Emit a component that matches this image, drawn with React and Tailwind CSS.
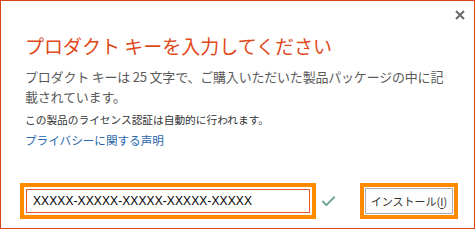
import { Check } from 'lucide-react';

const jp = "font-['Noto_Sans_CJK_JP','Noto_Sans',sans-serif]";

export default function App() {
  return (
    <div className="w-[476px] h-[230px] bg-white">
      <div className={`w-[475px] h-[229px] border border-[#dc4513] bg-white flex flex-col ${jp}`}>
        {/* Header with close */}
        <div className="h-[28px] flex justify-end items-start pt-[9px] pr-[9px]">
          <svg width="10" height="10" viewBox="0 0 10 10" className="text-[#6b6b6b]">
            <path d="M1 1 L9 9 M9 1 L1 9" stroke="currentColor" strokeWidth="2" />
          </svg>
        </div>

        {/* Text */}
        <div className="pl-[24px]">
          <h1 className="mt-[5px] text-[19px] leading-[24px] text-[#e0491a] font-normal whitespace-nowrap">
            プロダクト キーを入力してください
          </h1>
          <p className="mt-[9px] text-[13px] leading-[20px] tracking-[-0.2px] text-[#5a5a5a] whitespace-nowrap">
            プロダクト キーは 25 文字で、ご購入いただいた製品パッケージの中に記
            <br />
            載されています。
          </p>
          <p className="mt-[5px] text-[10.7px] leading-[16px] text-[#333333] whitespace-nowrap">
            この製品のライセンス認証は自動的に行われます。
          </p>
          <p className="mt-[4px] text-[11.6px] leading-[16px] text-[#2a66ac] whitespace-nowrap">
            プライバシーに関する声明
          </p>
        </div>

        {/* Key input row */}
        <div className="mt-auto mb-[9px] pl-[19px] flex items-center">
          <div className="w-[296px] h-[36px] border-4 border-[#ff8a00] p-[2px]">
            <div className="h-full border border-[#e8562f] flex items-center pl-[6px] font-['Liberation_Sans',sans-serif] text-[12px] text-black tracking-[0.1px]">
              XXXXX-XXXXX-XXXXX-XXXXX-XXXXX
            </div>
          </div>
          <Check size={17} strokeWidth={2.6} className="ml-[4px] text-[#6aa58c]" />
          <div className="ml-[23px] w-[98px] h-[36px] border-4 border-[#ff8a00] p-[1px]">
            <div className="h-full border border-[#adadad] bg-[#fdfdfd] flex items-center justify-center text-[11px] text-[#333333]">
              インストール(<span className="underline underline-offset-2">I</span>)
            </div>
          </div>
        </div>
      </div>
    </div>
  );
}
